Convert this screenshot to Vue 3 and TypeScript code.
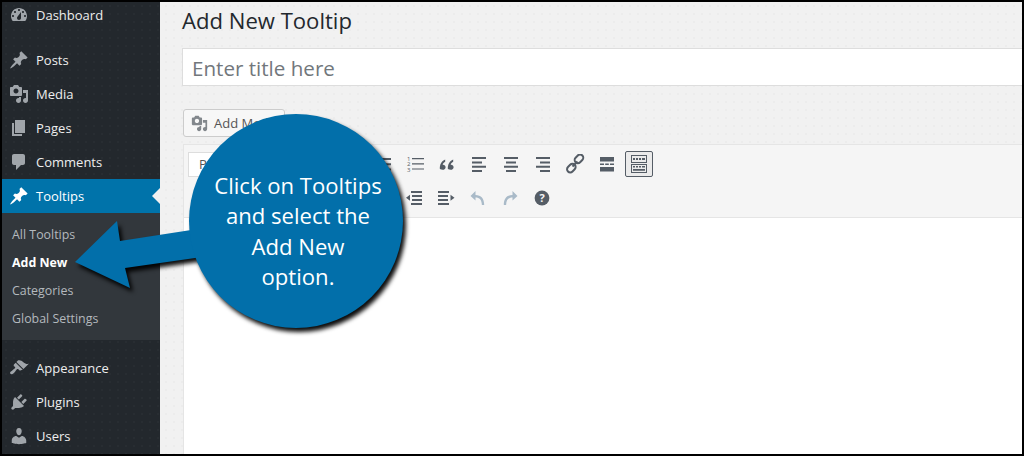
<script setup lang="ts">
interface NavItem { label: string; d: string }

const dashboard = 'M3.76 16h12.48c1.1-1.37 1.76-3.11 1.76-5 0-4.42-3.58-8-8-8s-8 3.58-8 8c0 1.89.66 3.63 1.76 5zM10 4c.55 0 1 .45 1 1s-.45 1-1 1-1-.45-1-1 .45-1 1-1zM6 6c.55 0 1 .45 1 1s-.45 1-1 1-1-.45-1-1 .45-1 1-1zm8 0c.55 0 1 .45 1 1s-.45 1-1 1-1-.45-1-1 .45-1 1-1zm-5.37 5.55L12 7v6c0 1.1-.9 2-2 2s-2-.9-2-2c0-.57.24-1.08.63-1.45zM4 10c.55 0 1 .45 1 1s-.45 1-1 1-1-.45-1-1 .45-1 1-1zm12 0c.55 0 1 .45 1 1s-.45 1-1 1-1-.45-1-1 .45-1 1-1z'
const pin = 'M10.44 3.02l1.82-1.82 6.36 6.35-1.83 1.82c-1.05-.68-2.48-.57-3.41.36l-.75.75c-.92.93-1.04 2.35-.35 3.41l-1.83 1.82-2.41-2.41-2.8 2.79c-.42.42-3.38 2.71-3.8 2.29s1.86-3.39 2.28-3.81l2.79-2.79L4.1 9.36l1.83-1.82c1.05.69 2.48.57 3.41-.36l.75-.75c.93-.92 1.04-2.35.35-3.41z'
const media = 'M13 11V4c0-.55-.45-1-1-1h-1.67L9 1H5L3.67 3H2c-.55 0-1 .45-1 1v7c0 .55.45 1 1 1h10c.55 0 1-.45 1-1zM7 4.5c1.38 0 2.5 1.12 2.5 2.5S8.38 9.5 7 9.5 4.5 8.38 4.5 7 5.62 4.5 7 4.5zM14 6h5v10.5c0 1.38-1.12 2.5-2.5 2.5S14 17.88 14 16.5s1.12-2.5 2.5-2.5c.17 0 .34.02.5.05V9h-3V6zm-4 8.05V13h2v3.5c0 1.38-1.12 2.5-2.5 2.5S7 17.88 7 16.5 8.12 14 9.5 14c.17 0 .34.02.5.05z'

const topItems: NavItem[] = [
  { label: 'Posts', d: pin },
  { label: 'Media', d: media },
  { label: 'Pages', d: 'M6 15V2h10v13H6zm-1 1h8v2H3V5h2v11z' },
  { label: 'Comments', d: 'M5 2h9c1.1 0 2 .9 2 2v7c0 1.1-.9 2-2 2h-2l-5 5v-5H5c-1.1 0-2-.9-2-2V4c0-1.1.9-2 2-2z' },
]
const bottomItems: NavItem[] = [
  { label: 'Appearance', d: 'M14.48 11.06L7.41 3.99l1.5-1.5c.5-.56 2.3-.47 3.51.32 1.21.8 1.43 1.28 2.91 2.1 1.18.64 2.45 1.26 4.45.85zm-.71.71L6.7 4.7 4.93 6.47c-.39.39-.39 1.02 0 1.41l1.06 1.06c.39.39.39 1.03 0 1.42-.6.6-1.43 1.11-2.21 1.69-.35.26-.7.53-1.01.84C1.43 13.23.4 14.8 1.44 15.83s2.6.1 3.94-1.34c.31-.31.57-.66.84-1.01.58-.78 1.08-1.61 1.69-2.21.39-.39 1.02-.39 1.41 0l1.06 1.06c.39.39 1.02.39 1.41 0z' },
  { label: 'Plugins', d: 'M13.11 4.36L9.87 7.6 8 5.73l3.24-3.24c.35-.34 1.05-.2 1.56.32.52.51.66 1.21.31 1.55zm-8 1.77l.91-1.12 9.01 9.01-1.19.84c-.71.71-2.63 1.16-3.82 1.16H6.14L4.9 17.26c-.59.59-1.54.59-2.12 0-.59-.58-.59-1.53 0-2.12l1.24-1.24v-3.88c0-1.13.4-3.19 1.09-3.89zm7.26 3.97l3.24-3.24c.34-.35 1.04-.21 1.55.31.52.51.66 1.21.31 1.55l-3.24 3.25z' },
  { label: 'Users', d: 'M10 9.25c-2.27 0-2.73-3.44-2.73-3.44C7 4.02 7.82 2 9.97 2c2.16 0 2.98 2.02 2.71 3.81 0 0-.41 3.44-2.68 3.44zm0 2.57L12.72 10c2.39 0 4.52 2.33 4.52 4.53v2.49s-3.65 1.13-7.24 1.13c-3.65 0-7.24-1.13-7.24-1.13v-2.49c0-2.25 1.94-4.48 4.47-4.48z' },
]
const subItems = ['All Tooltips', 'Add New', 'Categories', 'Global Settings']

const lines = (rows: [number, number, number][], t = 2) =>
  rows.map(([x, y, w]) => `M${x} ${y}h${w}v${t}H${x}z`).join('')

const row1: string[] = [
  lines([[7, 4, 12], [7, 9.2, 12], [7, 14.4, 12]], 1.2),
  'M2.8 14.6c0-4 1.5-7.2 5.4-9v2.2c-1.7 1-2.4 2-2.5 3 1.6-.2 2.9 1 2.9 2.4 0 1.5-1.2 2.6-2.9 2.6-1.9 0-2.9-.7-2.9-1.2zM10.8 14.6c0-4 1.5-7.2 5.4-9v2.2c-1.7 1-2.4 2-2.5 3 1.6-.2 2.9 1 2.9 2.4 0 1.5-1.2 2.6-2.9 2.6-1.9 0-2.9-.7-2.9-1.2z',
  lines([[3, 3, 14], [3, 7.4, 10], [3, 11.8, 14], [3, 16, 10]]),
  lines([[3, 3, 14], [5, 7.4, 10], [3, 11.8, 14], [5, 16, 10]]),
  lines([[3, 3, 14], [7, 7.4, 10], [3, 11.8, 14], [7, 16, 10]]),
  '',
  'M3 3h14v4.4H3zM3 9.4h4v1.6H3zM8.2 9.4h3.6v1.6H8.2zM13 9.4h4v1.6h-4zM3 13h14v4.4H3z',
  '',
]
const row2: string[] = [
  lines([[7, 3, 11], [8, 7, 10], [8, 11, 10], [7, 15, 11]]) + 'M2 9.8l4-3v6z',
  lines([[2, 3, 11], [2, 7, 10], [2, 11, 10], [2, 15, 11]]) + 'M18.5 9.8l-4-3v6z',
]
</script>

<template>
  <div class="frame">
    <aside class="sidebar">
      <a class="nav-item first">
        <svg class="nav-icon" viewBox="0 0 20 20"><path :d="dashboard" fill-rule="evenodd" /></svg>
        <span>Dashboard</span>
      </a>
      <div class="nav-group">
        <a v-for="item in topItems" :key="item.label" class="nav-item">
          <svg class="nav-icon" viewBox="0 0 20 20"><path :d="item.d" /></svg>
          <span>{{ item.label }}</span>
        </a>
        <a class="nav-item active">
          <svg class="nav-icon" viewBox="0 0 20 20"><path :d="pin" /></svg>
          <span>Tooltips</span>
          <i class="caret"></i>
        </a>
      </div>
      <ul class="submenu">
        <li v-for="s in subItems" :key="s" :class="{ current: s === 'Add New' }">{{ s }}</li>
      </ul>
      <div class="nav-group lower">
        <a v-for="item in bottomItems" :key="item.label" class="nav-item">
          <svg class="nav-icon" viewBox="0 0 20 20"><path :d="item.d" /></svg>
          <span>{{ item.label }}</span>
        </a>
      </div>
    </aside>

    <main class="content">
      <h1 class="title">Add New Tooltip</h1>
      <div class="title-input">Enter title here</div>
      <button class="media-btn" type="button">
        <svg class="media-icon" viewBox="0 0 20 20"><path :d="media" /></svg>
        <span>Add Media</span>
      </button>
      <section class="editor">
        <div class="toolbar">
          <div class="tool-row first-row">
            <div class="format">Paragraph</div>
            <span class="tool">
              <svg viewBox="0 0 20 20"><path :d="lines([[6, 4, 12], [6, 9.2, 12], [6, 14.4, 12]])" /></svg>
            </span>
            <span class="tool">
              <svg viewBox="0 0 20 20">
                <text x="2" y="7" class="digit">1</text>
                <text x="2" y="12.4" class="digit">2</text>
                <text x="2" y="17.8" class="digit">3</text>
                <path :d="row1[0]" />
              </svg>
            </span>
            <span v-for="(d, i) in row1.slice(1, 5)" :key="i" class="tool">
              <svg viewBox="0 0 20 20"><path :d="d" /></svg>
            </span>
            <span class="tool">
              <svg viewBox="0 0 20 20">
                <g fill="none" stroke="#555d66" stroke-width="2">
                  <rect x="9.2" y="1.6" width="9.5" height="6.4" rx="3.2" transform="rotate(-45 14 4.8)" />
                  <rect x="1.6" y="11" width="9.5" height="6.4" rx="3.2" transform="rotate(-45 6.3 14.2)" />
                  <path d="M7.5 12.5l5-5" />
                </g>
              </svg>
            </span>
            <span class="tool">
              <svg viewBox="0 0 20 20"><path :d="row1[6]" /></svg>
            </span>
            <span class="tool pressed">
              <svg viewBox="0 0 20 20">
                <g fill="none" stroke="#555d66" stroke-width="1">
                  <rect x="2.5" y="1.5" width="15" height="7" />
                  <rect x="2.5" y="10.5" width="15" height="8" />
                </g>
                <path d="M4 4h2v2H4zM7 4h2v2H7zM10 4h2v2h-2zM13 4h3v2h-3zM4 12h2v1.5H4zM7 12h2v1.5H7zM10 12h2v1.5h-2zM13 12h3v1.5h-3zM4 15h12v1.8H4z" />
              </svg>
            </span>
          </div>
          <div class="tool-row second-row">
            <span v-for="(d, i) in row2" :key="i" class="tool">
              <svg viewBox="0 0 20 20"><path :d="d" /></svg>
            </span>
            <span class="tool muted">
              <svg viewBox="0 0 20 20">
                <path d="M7.5 3L2.5 8l5 4.6V9.4c4 0 6.2 2.2 6.4 7.6h2.3c0-6.6-3-10-8.7-10z" />
              </svg>
            </span>
            <span class="tool muted">
              <svg viewBox="0 0 20 20">
                <path d="M12.5 3l5 5-5 4.6V9.4c-4 0-6.2 2.2-6.4 7.6H3.8c0-6.6 3-10 8.7-10z" />
              </svg>
            </span>
            <span class="tool">
              <svg viewBox="0 0 20 20">
                <circle cx="10" cy="10" r="7.4" />
                <text x="10" y="14" class="help">?</text>
              </svg>
            </span>
          </div>
        </div>
        <div class="editor-body"></div>
      </section>
    </main>

    <div class="callout">
      <svg class="callout-art" viewBox="0 0 1024 456" width="1024" height="456">
        <path d="M75 262L117 221L120 241L230 224L230 253L125 268L130 288Z" />
        <circle cx="296" cy="221" r="107" />
      </svg>
      <p class="callout-text">Click on Tooltips<br />and select the<br />Add New<br />option.</p>
    </div>
  </div>
</template>

<style>
html, body { margin: 0; padding: 0; background: #000; }
</style>

<style scoped>
.frame {
  position: relative;
  box-sizing: border-box;
  width: 1024px;
  height: 456px;
  display: flex;
  border: 2px solid #000;
  overflow: hidden;
  font-family: "Open Sans", "Liberation Sans", sans-serif;
  background-color: #f1f1f1;
  background-image: radial-gradient(circle, rgba(0, 0, 0, .018) 1px, transparent 1.2px);
  background-size: 8px 8px;
}
.sidebar {
  width: 158px;
  flex: none;
  background-color: #23282d;
  background-image: radial-gradient(circle, rgba(255, 255, 255, .025) 1px, transparent 1.2px);
  background-size: 8px 8px;
  color: #eee;
  font-size: 13px;
}
.nav-item {
  position: relative;
  display: flex;
  align-items: center;
  gap: 7px;
  height: 34px;
  padding-left: 7px;
}
.nav-item.first { height: 26px; }
.nav-group { margin-top: 15px; }
.nav-group.lower { margin-top: 11px; }
.nav-icon { width: 20px; height: 20px; fill: #a0a5aa; flex: none; }
.active { background: #0073aa; color: #fff; }
.active .nav-icon { fill: #fff; }
.caret {
  position: absolute;
  right: 0;
  top: 9px;
  border: 8px solid transparent;
  border-left: 0;
  border-right-color: #f1f1f1;
}
.submenu {
  margin: 0;
  padding: 8px 0 7px 10px;
  list-style: none;
  background: #32373c;
  color: #b4b9be;
  font-size: 12.4px;
}
.submenu li { height: 28px; line-height: 28px; }
.submenu .current { color: #fff; font-weight: 700; }

.content { flex: 1; min-width: 0; padding-left: 22px; }
.title {
  margin: 0;
  height: 46px;
  font-size: 22.1px;
  font-weight: 400;
  line-height: 36px;
  color: #23282d;
}
.title-input {
  box-sizing: border-box;
  height: 38px;
  margin-right: -1px;
  padding-left: 9px;
  border: 1px solid #ddd;
  background: #fff;
  color: #72777c;
  font-size: 20.6px;
  line-height: 39px;
}
.media-btn {
  box-sizing: border-box;
  display: flex;
  align-items: center;
  gap: 6px;
  width: 102px;
  height: 28px;
  margin: 23px 0 7px 1px;
  padding: 0 7px;
  border: 1px solid #ccc;
  border-radius: 3px;
  background: #f7f7f7;
  color: #555;
  font: 13px "Open Sans", sans-serif;
  white-space: nowrap;
}
.media-icon { width: 17px; height: 17px; fill: #82878c; flex: none; }
.editor { margin-left: 1px; height: 310px; display: flex; flex-direction: column; }
.toolbar {
  box-sizing: border-box;
  height: 74px;
  border: 1px solid #e5e5e5;
  border-right: 0;
  background: #f5f5f5;
}
.tool-row { display: flex; align-items: center; height: 32px; }
.first-row { margin-top: 3px; padding-left: 4px; }
.second-row { margin-top: 2px; padding-left: 214px; }
.format {
  box-sizing: border-box;
  width: 113px;
  height: 25px;
  margin-right: 66px;
  padding-left: 10px;
  border: 1px solid #ddd;
  background: #fff;
  color: #555;
  font-size: 13px;
  line-height: 23px;
}
.tool {
  box-sizing: border-box;
  display: flex;
  align-items: center;
  justify-content: center;
  width: 32px;
  height: 28px;
}
.tool svg { width: 20px; height: 20px; fill: #555d66; }
.tool.pressed {
  width: 28px;
  height: 26px;
  margin: 0 2px;
  border: 1px solid #555d66;
  border-radius: 2px;
  background: #ebebeb;
}
.tool.muted svg { fill: #a9bac8; }
.digit { font: 6px "Open Sans", sans-serif; }
.help { font: 700 11px "Open Sans", sans-serif; fill: #f5f5f5; text-anchor: middle; }
.editor-body {
  flex: 1;
  border-left: 1px solid #e5e5e5;
  background: #fff;
}
.callout {
  position: absolute;
  left: -2px;
  top: -2px;
  width: 1024px;
  height: 456px;
  pointer-events: none;
}
.callout-art {
  position: absolute;
  left: 0;
  top: 0;
  fill: #026faa;
  filter: drop-shadow(3px 4px 2px rgba(0, 0, 0, .95));
}
.callout-text {
  position: absolute;
  left: 189px;
  top: 170px;
  width: 218px;
  margin: 0;
  text-align: center;
  color: #fff;
  font-size: 22.1px;
  line-height: 30.3px;
}
</style>
